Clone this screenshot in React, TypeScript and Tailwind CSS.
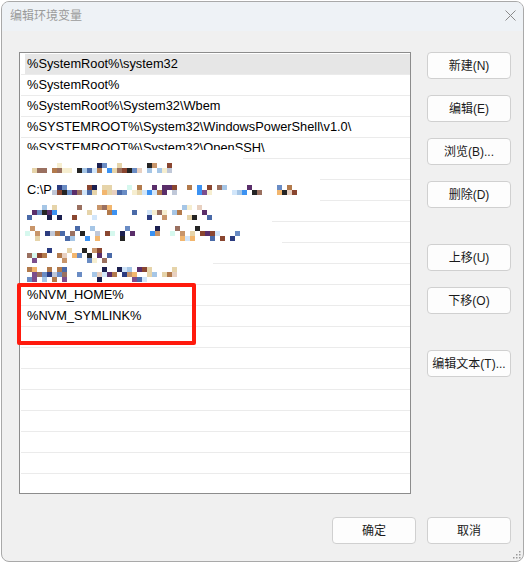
import React from "react";

const FONT = { fontFamily: '"Liberation Sans", "Noto Sans CJK SC", sans-serif' };

function mulberry32(a: number) {
  return function () {
    a |= 0;
    a = (a + 0x6d2b79f5) | 0;
    let t = Math.imul(a ^ (a >>> 15), 1 | a);
    t = (t + Math.imul(t ^ (t >>> 7), 61 | t)) ^ t;
    return ((t ^ (t >>> 14)) >>> 0) / 4294967296;
  };
}

const PALETTE = [
  "#b27a4c", "#c8956a", "#8a4630", "#1c2050", "#2c3c80", "#5a2e6a", "#7c4e8c",
  "#6a8cc4", "#a6c6e6", "#d2e6fa", "#f6eed0", "#e6d4aa", "#242424", "#d6f8ee",
  "#f2b66e", "#3c92f2", "#9a7060", "#c0c8d8", "#e8d0c0", "#4a6aa8",
];

type Spec = { y: number; rows: number; x0: number; x1: number; seed: number; density: number };

const SPECS: Spec[] = [
  { y: 163, rows: 2, x0: 27, x1: 170, seed: 11, density: 0.7 },
  { y: 185, rows: 2, x0: 52, x1: 300, seed: 22, density: 0.6 },
  { y: 205, rows: 3, x0: 27, x1: 215, seed: 33, density: 0.55 },
  { y: 226, rows: 3, x0: 25, x1: 245, seed: 44, density: 0.55 },
  { y: 248, rows: 3, x0: 27, x1: 112, seed: 55, density: 0.6 },
  { y: 267, rows: 3, x0: 27, x1: 177, seed: 66, density: 0.6 },
];

function Mosaic() {
  const rects: React.ReactNode[] = [];
  const ox = 20;
  const oy = 150;
  const whites = [
    [20, 150, 243, 10],
    [20, 177, 320, 4],
    [20, 198, 320, 4],
    [20, 219, 272, 4],
    [20, 240, 282, 4],
    [20, 261, 213, 4],
  ];
  whites.forEach(([x, y, w, h], i) =>
    rects.push(<rect key={"w" + i} x={x - ox} y={y - oy} width={w - x} height={h} fill="#ffffff" />)
  );
  SPECS.forEach((sp, si) => {
    const r = mulberry32(sp.seed);
    for (let row = 0; row < sp.rows; row++) {
      for (let x = sp.x0; x < sp.x1; x += 5) {
        const v = r();
        const p = row === 1 ? sp.density : sp.density * 0.5;
        if (v < p) {
          const c = PALETTE[Math.floor(r() * PALETTE.length)];
          rects.push(
            <rect key={`b${si}-${row}-${x}`} x={x - ox} y={sp.y + row * 5 - oy} width={5} height={5} fill={c} />
          );
        }
      }
    }
  });
  return (
    <svg className="absolute left-[1px] top-[98px]" width={310} height={135} viewBox="0 0 310 135">
      {rects}
    </svg>
  );
}

const ROWS: string[] = [
  "%SystemRoot%\\system32",
  "%SystemRoot%",
  "%SystemRoot%\\System32\\Wbem",
  "%SYSTEMROOT%\\System32\\WindowsPowerShell\\v1.0\\",
  "%SYSTEMROOT%\\System32\\OpenSSH\\",
  "",
  "C:\\P",
  "",
  "",
  "",
  "",
  "%NVM_HOME%",
  "%NVM_SYMLINK%",
  "", "", "", "", "", "", "", "",
];

function Btn({ children, className = "" }: { children: React.ReactNode; className?: string }) {
  return (
    <div
      className={
        "w-[84px] h-[27px] flex items-center justify-center rounded-[4px] border border-[#d0d0d0] bg-[#fdfdfd] text-[12px] text-[#1a1a1a] " +
        className
      }
    >
      {children}
    </div>
  );
}

export default function App() {
  return (
    <div className="w-[527px] h-[563px] bg-white overflow-hidden pl-[1px] pt-[1px]" style={FONT}>
      <div className="w-[523px] h-[561px] border border-[#a9a9a9] rounded-[8px] overflow-hidden bg-[#f0f0f0] flex flex-col relative">
        {/* title bar */}
        <div className="h-[29px] shrink-0 bg-[#eef2f6] flex items-center justify-between pl-[8px] pb-[2px]">
          <span className="text-[12px] text-[#9b9b9b]">编辑环境变量</span>
          <svg className="mr-[7px]" width="11" height="11" viewBox="0 0 11 11">
            <path d="M0.5 0.5 L10.5 10.5 M10.5 0.5 L0.5 10.5" stroke="#8a8a8a" strokeWidth="1" fill="none" />
          </svg>
        </div>
        {/* body */}
        <div className="flex flex-col pl-[17px] pt-[21px]">
          <div className="flex">
            <div className="relative">
              <div className="w-[392px] h-[442px] border border-[#8c8c8c] bg-white overflow-hidden pt-[1px]">
                {ROWS.map((t, i) => (
                  <div key={i} className="ml-[1px] h-[21px] border-b border-[#ebebeb]">
                    <div className={"ml-[4px] h-[20px] pl-[2px] " + (i === 0 ? "bg-[#e6e6e6]" : "")}>
                      <span className="block text-[12.8px] leading-[20px] text-black whitespace-nowrap">{t}</span>
                    </div>
                  </div>
                ))}
              </div>
              <Mosaic />
              <div className="absolute left-[-2px] top-[231px] w-[179px] h-[62px] border-[4px] border-[#ff1a0d] rounded-[2px]" />
            </div>
            <div className="ml-[16px] flex flex-col">
              <Btn>新建(N)</Btn>
              <Btn className="mt-[16px]">编辑(E)</Btn>
              <Btn className="mt-[16px]">浏览(B)...</Btn>
              <Btn className="mt-[16px]">删除(D)</Btn>
              <Btn className="mt-[36px]">上移(U)</Btn>
              <Btn className="mt-[16px]">下移(O)</Btn>
              <Btn className="mt-[36px]">编辑文本(T)...</Btn>
            </div>
          </div>
          <div className="flex justify-end pr-[12px] mt-[23px] gap-[11px]">
            <Btn>确定</Btn>
            <Btn>取消</Btn>
          </div>
        </div>
        {/* resize grip */}
        <svg className="absolute right-[2px] bottom-[2px]" width="9" height="9" viewBox="0 0 9 9">
          {[[7, 1], [4, 4], [7, 4], [1, 7], [4, 7], [7, 7]].map(([x, y], i) => (
            <rect key={i} x={x} y={y} width="1.5" height="1.5" fill="#9a9a9a" />
          ))}
        </svg>
      </div>
    </div>
  );
}
